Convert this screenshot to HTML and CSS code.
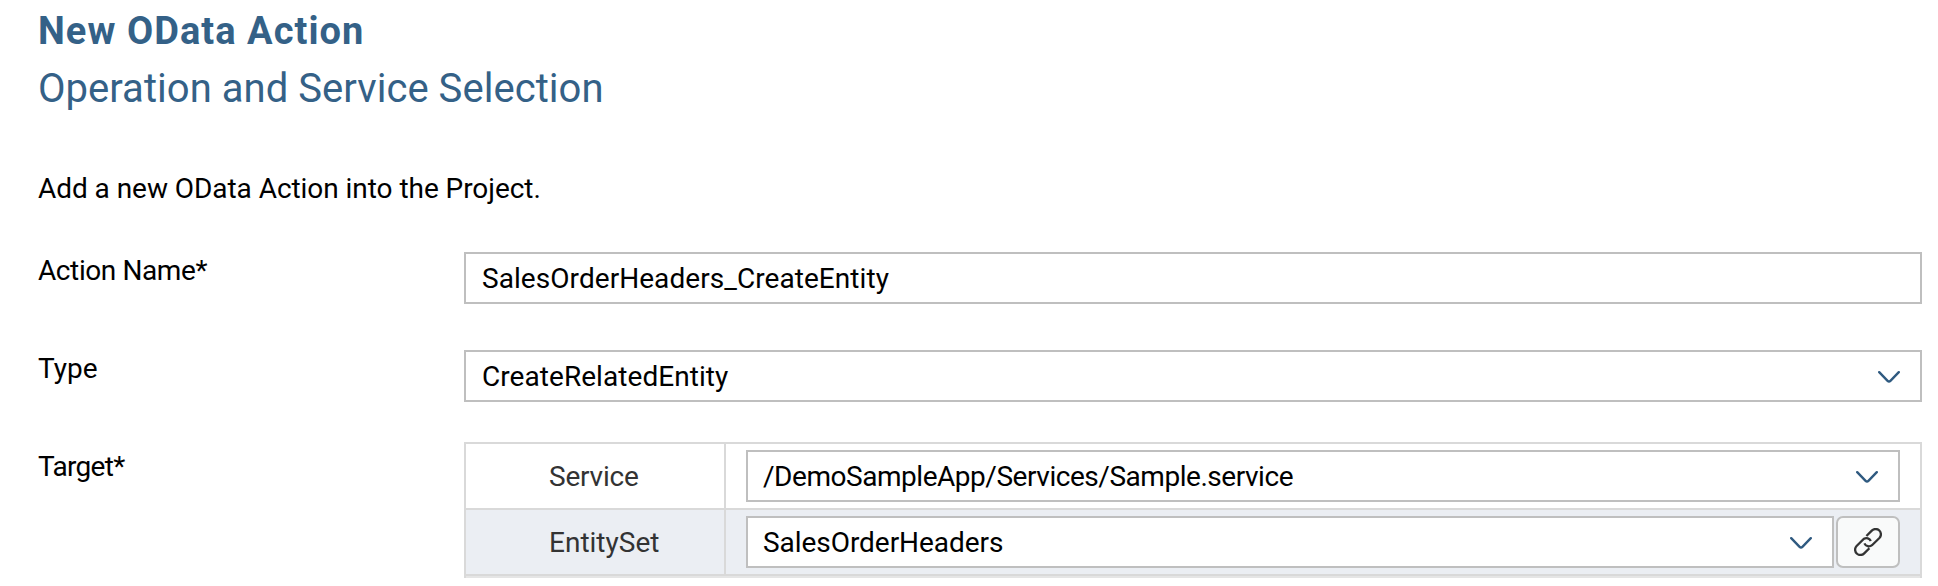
FILE: index.html
```html
<!DOCTYPE html>
<html lang="en">
<head>
<meta charset="utf-8">
<title>New OData Action</title>
<link rel="stylesheet" href="styles.css">
</head>
<body>
<main class="wizard">
  <h1 class="title">New OData Action</h1>
  <h2 class="subtitle">Operation and Service Selection</h2>
  <p class="intro">Add a new OData Action into the Project.</p>

  <div class="field">
    <label class="label"><span class="t-name">Action Name*</span></label>
    <div class="input"><span class="t-entity">SalesOrderHeaders_CreateEntity</span></div>
  </div>

  <div class="field">
    <label class="label">Type</label>
    <div class="input">
      <span class="t-related">CreateRelatedEntity</span>
      <svg class="chevron" viewBox="0 0 22 12"><path d="M1.2 1.2 9.6 9.8Q11 11.2 12.4 9.8L20.8 1.2"/></svg>
    </div>
  </div>

  <div class="field field-target">
    <label class="label"><span class="t-target">Target*</span></label>
    <div class="table">
      <div class="row">
        <div class="key"><span class="t-service">Service</span></div>
        <div class="value">
          <div class="input">
            <span class="t-path">/DemoSampleApp/Services/Sample.service</span>
            <svg class="chevron" viewBox="0 0 22 12"><path d="M1.2 1.2 9.6 9.8Q11 11.2 12.4 9.8L20.8 1.2"/></svg>
          </div>
        </div>
      </div>
      <div class="row row-alt">
        <div class="key">EntitySet</div>
        <div class="value">
          <div class="input">
            <span class="t-headers">SalesOrderHeaders</span>
            <svg class="chevron" viewBox="0 0 22 12"><path d="M1.2 1.2 9.6 9.8Q11 11.2 12.4 9.8L20.8 1.2"/></svg>
          </div>
          <button class="link-button" type="button" aria-label="Link">
            <svg class="link" viewBox="0 0 28 28"><path d="M12.4 8 17.8 2.6A4.9 4.9 0 0 1 25.4 10L18 17.2A4.9 4.9 0 0 1 10.4 15.4M15.4 20.2 10.2 25.4A4.9 4.9 0 0 1 2.6 18L10 10.8A4.9 4.9 0 0 1 16.8 13"/></svg>
          </button>
        </div>
      </div>
      <div class="row-next"></div>
    </div>
  </div>
</main>
</body>
</html>
```
FILE: styles.css
```css
* { box-sizing: border-box; }

body {
  margin: 0;
  background: #fff;
  color: #000;
  font-family: Roboto, "Liberation Sans", sans-serif;
  font-size: 28px;
}

.wizard {
  height: 586px;
  padding: 8px 16px 0 38px;
}

.title, .subtitle, .intro {
  margin: 0;
  white-space: nowrap;
}

.title {
  height: 56px;
  line-height: 46px;
  font-size: 38px;
  font-weight: 700;
  letter-spacing: 1.05px;
  color: #346187;
}

.subtitle {
  height: 104px;
  line-height: 50px;
  font-size: 40px;
  font-weight: 400;
  letter-spacing: 0.04px;
  color: #346187;
}

.intro {
  height: 84px;
  line-height: 42px;
  letter-spacing: -0.05px;
}

.field {
  display: grid;
  grid-template-columns: 426px 1fr;
  height: 98px;
}

.label {
  padding-top: 2px;
  line-height: 34px;
}

.t-name { letter-spacing: -0.4px; }
.t-target { letter-spacing: -0.7px; }
.t-entity, .t-related { letter-spacing: 0.06px; }
.t-service { letter-spacing: -0.2px; }
.t-path { letter-spacing: -0.46px; }
.t-headers { letter-spacing: -0.05px; }

.input {
  display: flex;
  flex: 1;
  align-items: center;
  justify-content: space-between;
  height: 52px;
  padding: 0 20px 0 16px;
  border: 2px solid #bfbfbf;
  background: #fff;
  line-height: 46px;
  white-space: nowrap;
}

.input span { padding-top: 2px; }

.chevron {
  width: 22px;
  height: 12px;
  margin-top: 2px;
  fill: none;
  stroke: #2f5a80;
  stroke-width: 2.4;
  stroke-linecap: round;
}

.field-target .table { margin-top: -6px; }

.table {
  height: 136px;
  border: 2px solid #d9d9d9;
  border-bottom: 0;
}

.row {
  display: grid;
  grid-template-columns: 260px 1fr;
  height: 66px;
  border-bottom: 2px solid #d9d9d9;
}

.row-alt { background: #ebeef3; }

.row-next {
  height: 2px;
  background: #e5e5e5;
}

.key {
  padding-top: 2px;
  padding-left: 83px;
  border-right: 2px solid #d9d9d9;
  line-height: 62px;
  color: #333;
}

.value {
  display: flex;
  align-items: center;
  gap: 2px;
  padding: 0 20px;
}

.value .input { padding-left: 15px; }

.link-button {
  display: flex;
  align-items: center;
  justify-content: center;
  width: 64px;
  height: 52px;
  padding: 0;
  border: 2px solid #bfbfbf;
  border-radius: 7px;
  background: #f9fafa;
}

.link {
  width: 28px;
  height: 28px;
  fill: none;
  stroke: #333;
  stroke-width: 2.3;
  stroke-linecap: butt;
}
```
